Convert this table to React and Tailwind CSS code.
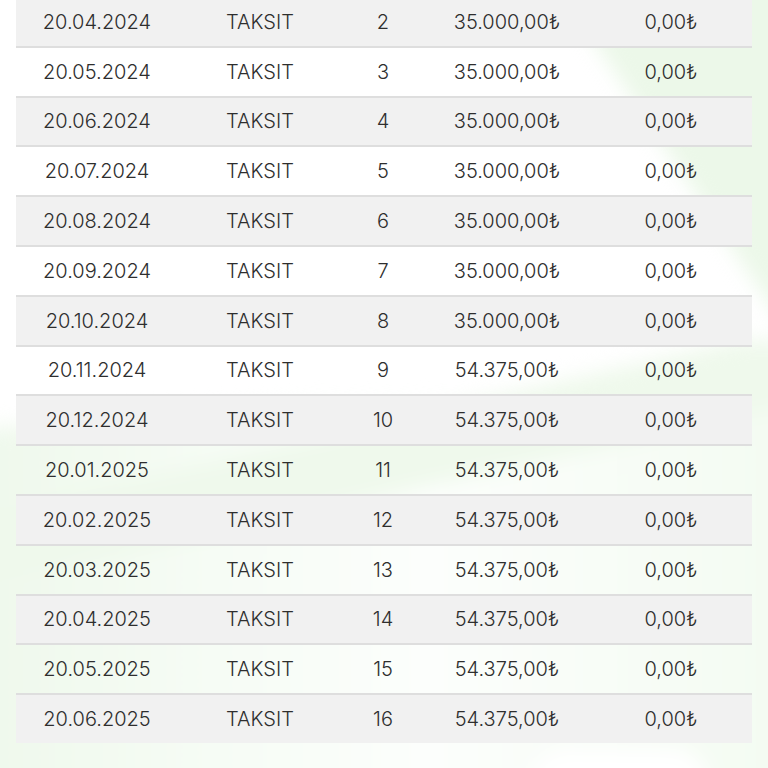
import React from 'react';

const rows = [
  ['20.04.2024', 2, '35.000,00'],
  ['20.05.2024', 3, '35.000,00'],
  ['20.06.2024', 4, '35.000,00'],
  ['20.07.2024', 5, '35.000,00'],
  ['20.08.2024', 6, '35.000,00'],
  ['20.09.2024', 7, '35.000,00'],
  ['20.10.2024', 8, '35.000,00'],
  ['20.11.2024', 9, '54.375,00'],
  ['20.12.2024', 10, '54.375,00'],
  ['20.01.2025', 11, '54.375,00'],
  ['20.02.2025', 12, '54.375,00'],
  ['20.03.2025', 13, '54.375,00'],
  ['20.04.2025', 14, '54.375,00'],
  ['20.05.2025', 15, '54.375,00'],
  ['20.06.2025', 16, '54.375,00'],
];

// soft green swooshes behind the table (coords offset by the 40px bleed)
function Backdrop() {
  return (
    <div className="absolute inset-0 overflow-hidden bg-white">
      <div className="absolute -inset-10 blur-[10px]">
        <div className="absolute inset-0 bg-[#ecf8e9] [clip-path:polygon(580px_0,900px_0,900px_480px)]" />
        <div className="absolute inset-0 bg-[linear-gradient(90deg,#eef8eb_0%,#f6fcf5_30%,#fcfefc_55%,#f3fbf1_100%)] [clip-path:polygon(0_470px,340px_445px,600px_440px,900px_370px,900px_900px,0_900px)]" />
        <div className="absolute inset-0 bg-[#eff9ec] [clip-path:polygon(0_560px,780px_380px,900px_380px,900px_430px,0_630px)]" />
        <div className="absolute left-[570px] top-[788px] h-[80px] w-[180px] rounded-t-[40px] bg-white" />
      </div>
    </div>
  );
}

export default function App() {
  return (
    <div className="relative h-[768px] w-[768px] overflow-hidden text-[#2e2e2e] [font-family:Inter,'Noto_Sans','DejaVu_Sans',sans-serif]">
      <Backdrop />
      <div className="relative mx-4 -mt-[4px]">
        {rows.map(([date, no, amount], i) => (
          <div
            key={date}
            className={`grid h-[49.8px] grid-cols-[162px_164px_82px_166px_162px] items-center border-t-2 border-[#dedede] text-[20px] font-light leading-none
              ${i % 2 === 0 ? 'bg-[#f1f1f1]' : 'bg-transparent'}`}
          >
            <span className="text-center">{date}</span>
            <span className="text-center">TAKSIT</span>
            <span className="text-center">{no}</span>
            <span className="text-center">{amount}₺</span>
            <span className="text-center">0,00₺</span>
          </div>
        ))}
      </div>
    </div>
  );
}
